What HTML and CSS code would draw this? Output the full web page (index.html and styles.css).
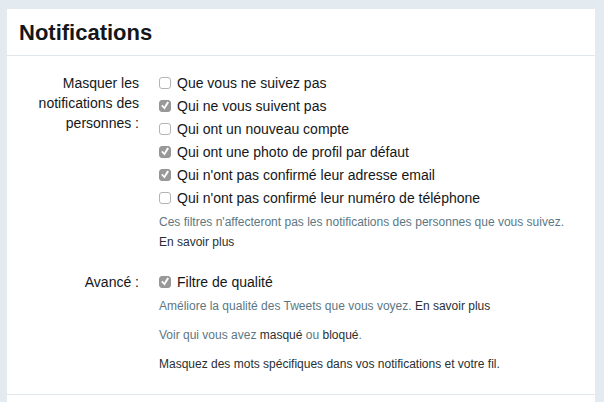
FILE: index.html
```html
<!DOCTYPE html>
<html lang="fr">
<head>
<meta charset="utf-8">
<title>Notifications</title>
<link rel="stylesheet" href="styles.css">
</head>
<body>
<main class="card">
  <header class="card-header">
    <h1 class="title">Notifications</h1>
  </header>
  <form class="settings">
    <div class="group" role="group" aria-labelledby="mute-label">
      <div class="group-label" id="mute-label">Masquer les notifications des personnes :</div>
      <div class="group-body">
        <label class="option"><input class="check" type="checkbox"><span>Que vous ne suivez pas</span></label>
        <label class="option"><input class="check" type="checkbox" checked><span>Qui ne vous suivent pas</span></label>
        <label class="option"><input class="check" type="checkbox"><span>Qui ont un nouveau compte</span></label>
        <label class="option"><input class="check" type="checkbox" checked><span>Qui ont une photo de profil par défaut</span></label>
        <label class="option"><input class="check" type="checkbox" checked><span>Qui n'ont pas confirmé leur adresse email</span></label>
        <label class="option"><input class="check" type="checkbox"><span>Qui n'ont pas confirmé leur numéro de téléphone</span></label>
        <div class="help">
          <p>Ces filtres n'affecteront pas les notifications des personnes que vous suivez. <a href="#">En savoir plus</a></p>
        </div>
      </div>
    </div>
    <div class="group" role="group" aria-labelledby="advanced-label">
      <div class="group-label" id="advanced-label">Avancé :</div>
      <div class="group-body">
        <label class="option"><input class="check" type="checkbox" checked><span>Filtre de qualité</span></label>
        <div class="help">
          <p>Améliore la qualité des Tweets que vous voyez. <a href="#">En savoir plus</a></p>
          <p>Voir qui vous avez <a href="#">masqué</a> ou <a href="#">bloqué</a>.</p>
          <p><a href="#">Masquez des mots spécifiques dans vos notifications et votre fil.</a></p>
        </div>
      </div>
    </div>
  </form>
</main>
</body>
</html>
```
FILE: styles.css
```css
* {
  box-sizing: border-box;
}

body {
  margin: 0;
  padding: 9px 9px 0 7px;
  min-height: 100vh;
  display: flex;
  background: #e3ebf0;
  color: #14171a;
  font: 14px/20px "Liberation Sans", Arial, sans-serif;
}

.card {
  flex: 1;
  background: #fff;
}

.card-header {
  padding: 10px 12px 8px;
  border-bottom: 1px solid #e1e8ed;
}

.title {
  margin: 0;
  font-size: 22px;
  line-height: 28px;
  font-weight: bold;
}

.settings {
  display: flex;
  flex-direction: column;
  gap: 18px;
  padding: 15px 12px 20px;
  border-bottom: 1px solid #e1e8ed;
}

.group {
  display: grid;
  grid-template-columns: 120px 1fr;
  gap: 20px;
}

.group-label {
  padding-top: 2px;
  text-align: right;
}

.option {
  display: flex;
  align-items: center;
  gap: 6px;
  height: 23px;
}

.check {
  appearance: none;
  position: relative;
  flex: none;
  width: 12px;
  height: 12px;
  margin: 0;
  border: 1px solid #b4b4b4;
  border-radius: 3px;
  background: #fff;
}

.check:checked {
  border-color: #969696;
  background: #999;
}

.check:checked::after {
  content: "";
  position: absolute;
  inset: 0;
  background: #fff;
  clip-path: polygon(12% 54%, 26% 42%, 42% 62%, 72% 10%, 90% 20%, 46% 90%);
}

.help {
  display: flex;
  flex-direction: column;
  gap: 9px;
  margin-top: 3px;
  color: #5c7783;
  font-size: 12px;
}

.help p {
  margin: 0;
}

.help a {
  display: inline-block;
  color: #292f33;
  text-decoration: none;
}
```
